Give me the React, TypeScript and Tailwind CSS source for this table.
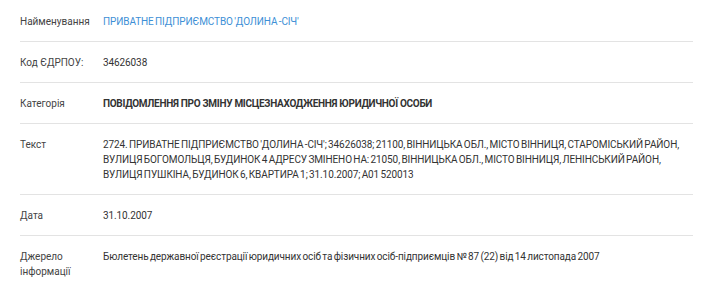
import React from "react";

const rows: { label: string; value: React.ReactNode }[] = [
  {
    label: "Найменування",
    value: (
      <span className="text-[#3d8fd6]">ПРИВАТНЕ ПІДПРИЄМСТВО 'ДОЛИНА -СІЧ'</span>
    ),
  },
  { label: "Код ЄДРПОУ:", value: "34626038" },
  {
    label: "Категорія",
    value: (
      <span className="font-bold uppercase tracking-[-0.3px] [word-spacing:0px]">
        ПОВІДОМЛЕННЯ ПРО ЗМІНУ МІСЦЕЗНАХОДЖЕННЯ ЮРИДИЧНОЇ ОСОБИ
      </span>
    ),
  },
  {
    label: "Текст",
    value:
      "2724. ПРИВАТНЕ ПІДПРИЄМСТВО 'ДОЛИНА -СІЧ'; 34626038; 21100, ВІННИЦЬКА ОБЛ., МІСТО ВІННИЦЯ, СТАРОМІСЬКИЙ РАЙОН, ВУЛИЦЯ БОГОМОЛЬЦЯ, БУДИНОК 4 АДРЕСУ ЗМІНЕНО НА: 21050, ВІННИЦЬКА ОБЛ., МІСТО ВІННИЦЯ, ЛЕНІНСЬКИЙ РАЙОН, ВУЛИЦЯ ПУШКІНА, БУДИНОК 6, КВАРТИРА 1; 31.10.2007; А01 520013",
  },
  { label: "Дата", value: "31.10.2007" },
  {
    label: "Джерело інформації",
    value:
      "Бюлетень державної реєстрації юридичних осіб та фізичних осіб-підприємців № 87 (22) від 14 листопада 2007",
  },
];

export default function App() {
  return (
    <div className="bg-white w-[704px] h-[286px] px-5 pt-px font-['Roboto',sans-serif] text-[10px] leading-[15px] text-[#333]">
      <div className="w-[673px]">
        {rows.map((row, i) => (
          <div
            key={i}
            className={`flex pt-[13px] pb-3 ${i < rows.length - 1 ? "border-b border-[#e3e3e3]" : ""}`}
          >
            <div className="w-[83px] shrink-0 pr-2 text-[#444]">{row.label}</div>
            <div className="flex-1 tracking-[-0.1px] [word-spacing:-1px]">{row.value}</div>
          </div>
        ))}
      </div>
    </div>
  );
}
